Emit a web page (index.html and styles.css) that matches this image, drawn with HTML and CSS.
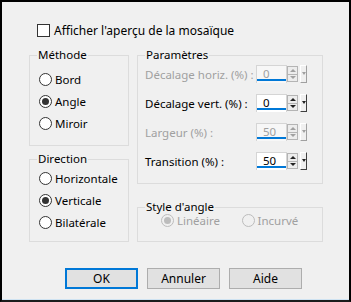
FILE: index.html
```html
<!DOCTYPE html>
<html lang="fr">
<head>
    <meta charset="UTF-8">
    <meta name="viewport" content="width=device-width, initial-scale=1.0">
    <title>Mosaïque</title>
    <link rel="stylesheet" href="styles.css">
</head>
<body>
    <div class="dialog">
        <label class="check-row">
            <span class="checkbox"></span>
            Afficher l'aperçu de la mosaïque
        </label>

        <div class="panels">
            <div class="col">
                <fieldset class="group method">
                    <legend>Méthode</legend>
                    <label class="radio-row"><span class="radio"></span>Bord</label>
                    <label class="radio-row"><span class="radio checked"></span>Angle</label>
                    <label class="radio-row"><span class="radio"></span>Miroir</label>
                </fieldset>

                <fieldset class="group direction">
                    <legend>Direction</legend>
                    <label class="radio-row"><span class="radio"></span>Horizontale</label>
                    <label class="radio-row"><span class="radio checked"></span>Verticale</label>
                    <label class="radio-row"><span class="radio"></span>Bilatérale</label>
                </fieldset>
            </div>

            <div class="col">
                <fieldset class="group params">
                    <legend>Paramètres</legend>
                    <div class="field-row disabled">
                        <span class="field-label">Décalage horiz. (%) :</span>
                        <div class="spin">
                            <span class="spin-value">0</span>
                            <span class="spin-arrows"><i class="up"></i><i class="down"></i></span>
                            <span class="spin-drop"><i class="down"></i></span>
                        </div>
                    </div>
                    <div class="field-row">
                        <span class="field-label">Décalage vert. (%) :</span>
                        <div class="spin">
                            <span class="spin-value">0</span>
                            <span class="spin-arrows"><i class="up"></i><i class="down"></i></span>
                            <span class="spin-drop"><i class="down"></i></span>
                        </div>
                    </div>
                    <div class="field-row disabled">
                        <span class="field-label">Largeur (%) :</span>
                        <div class="spin">
                            <span class="spin-value">50</span>
                            <span class="spin-arrows"><i class="up"></i><i class="down"></i></span>
                            <span class="spin-drop"><i class="down"></i></span>
                        </div>
                    </div>
                    <div class="field-row">
                        <span class="field-label">Transition (%) :</span>
                        <div class="spin">
                            <span class="spin-value">50</span>
                            <span class="spin-arrows"><i class="up"></i><i class="down"></i></span>
                            <span class="spin-drop"><i class="down"></i></span>
                        </div>
                    </div>
                </fieldset>

                <fieldset class="group corner">
                    <legend>Style d'angle</legend>
                    <div class="corner-options">
                        <label class="radio-row disabled"><span class="radio checked"></span>Linéaire</label>
                        <label class="radio-row disabled"><span class="radio"></span>Incurvé</label>
                    </div>
                </fieldset>
            </div>
        </div>

        <div class="buttons">
            <button class="btn default">OK</button>
            <button class="btn">Annuler</button>
            <button class="btn">Aide</button>
        </div>
    </div>
</body>
</html>
```

FILE: styles.css
```css
body {
    margin: 0;
    padding: 0;
}

.dialog {
    width: 351px;
    height: 302px;
    box-sizing: border-box;
    border: 2px solid #000;
    border-bottom-color: #1b1b1b;
    box-shadow: inset 0 -1px 0 #cfe3f2;
    background: #f0f0f0;
    padding: 20px 0 0 27px;
    font-family: "Noto Sans", "Open Sans", sans-serif;
    font-size: 11.5px;
    color: #000;
}

.check-row {
    display: flex;
    align-items: center;
    gap: 4px;
    height: 16px;
    margin-left: 8px;
    font-size: 12px;
}

.checkbox {
    width: 11px;
    height: 11px;
    border: 1px solid #333;
    background: #fff;
}

.panels {
    display: grid;
    grid-template-columns: 100px 186px;
    column-gap: 8px;
    margin-top: 9px;
}

.col {
    display: flex;
    flex-direction: column;
}

.group {
    margin: 0;
    padding: 0 0 0 9px;
    border: 1px solid #dcdcdc;
    box-sizing: border-box;
    min-width: 0;
}

.group legend {
    margin-left: -2px;
    padding: 0 1px;
    line-height: 16px;
}

.method {
    height: 99px;
    padding-top: 5px;
}

.direction {
    height: 91px;
    margin-top: 5px;
}

.params {
    height: 137px;
    padding-left: 7px;
}

.params legend {
    margin-left: 0;
}

.corner {
    height: 43px;
    margin-top: 15px;
}

.radio-row {
    display: flex;
    align-items: center;
    gap: 3px;
    height: 22px;
    white-space: nowrap;
}

.radio {
    flex: none;
    width: 11px;
    height: 11px;
    border: 1px solid #333;
    border-radius: 50%;
    background: #fff;
    display: flex;
    align-items: center;
    justify-content: center;
}

.radio.checked::after {
    content: "";
    width: 7px;
    height: 7px;
    border-radius: 50%;
    background: #333;
}

.radio-row.disabled {
    color: #a0a0a0;
}

.radio-row.disabled .radio {
    border-color: #bcbcbc;
    background: #f0f0f0;
}

.radio-row.disabled .radio.checked::after {
    background: #bcbcbc;
}

.field-row {
    display: flex;
    align-items: center;
    height: 22px;
    margin-bottom: 7px;
}

.field-label {
    width: 111px;
    flex: none;
    white-space: nowrap;
}

.field-row.disabled {
    color: #a0a0a0;
}

.spin {
    display: flex;
    height: 18px;
}

.spin-value {
    width: 31px;
    box-sizing: border-box;
    border: 1px solid #d5d5d5;
    border-bottom: none;
    background: #fff;
    padding-left: 6px;
    line-height: 16px;
    box-shadow: inset 0 -2px 0 #fff, inset 0 -4px 0 #0078d7;
}

.field-row.disabled .spin-value {
    background: #f7f7f7;
    box-shadow: inset 0 -2px 0 #f7f7f7, inset 0 -4px 0 #0078d7;
}

.spin-arrows {
    width: 11px;
    height: 16px;
    margin-top: 1px;
    box-sizing: border-box;
    border: 1px solid #b4b4b4;
    background: #ececec;
    display: flex;
    flex-direction: column;
}

.spin-arrows i {
    flex: 1;
    display: flex;
    align-items: center;
    justify-content: center;
}

.spin-arrows i.up {
    border-bottom: 1px solid #b4b4b4;
}

.spin i.up::before,
.spin i.down::before {
    content: "";
    border-left: 3px solid transparent;
    border-right: 3px solid transparent;
}

.spin i.up::before {
    border-bottom: 3px solid #222;
}

.spin i.down::before {
    border-top: 3px solid #222;
}

.spin-drop {
    width: 7px;
    height: 18px;
    margin-left: 2px;
    box-sizing: border-box;
    border: 1px solid;
    border-color: #fff #404040 #404040 #fff;
    background: #f0f0f0;
    display: flex;
    justify-content: center;
    padding-top: 6px;
}

.spin-drop i {
    display: flex;
    height: 3px;
}

.spin-drop i.down::before {
    border-left-width: 2px;
    border-right-width: 2px;
}

.field-row.disabled .spin i::before {
    border-top-color: #a0a0a0;
    border-bottom-color: #a0a0a0;
}

.field-row.disabled .spin i.up::before {
    border-top-color: transparent;
}

.field-row.disabled .spin i.down::before {
    border-bottom-color: transparent;
}

.field-row.disabled .spin-drop {
    border-color: #fff #a0a0a0 #a0a0a0 #fff;
}

.corner-options {
    display: flex;
    padding-left: 14px;
    margin-top: -6px;
}

.corner-options .radio-row {
    width: 82px;
}

.buttons {
    display: flex;
    gap: 9px;
    margin: 26px 0 0 36px;
}

.btn {
    width: 73px;
    height: 21px;
    box-sizing: border-box;
    border: 1px solid #adadad;
    background: #e1e1e1;
    font-family: inherit;
    font-size: 12px;
    color: #000;
    padding: 0;
    margin: 0;
}

.btn.default {
    border: 2px solid #0078d7;
}
```
